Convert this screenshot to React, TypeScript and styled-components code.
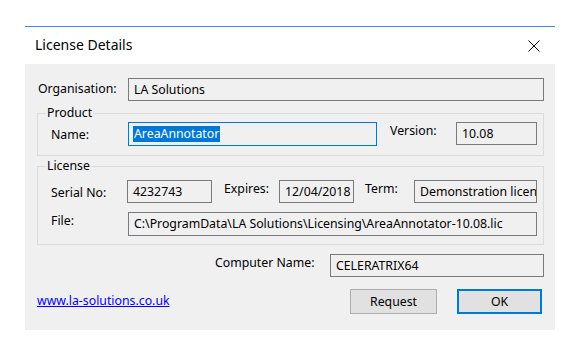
import styled, {createGlobalStyle} from 'styled-components';

const GlobalStyle = createGlobalStyle`
	body {
		margin: 0;
		background: #ffffff;
		font-family: 'Noto Sans', 'Open Sans', sans-serif;
		font-size: 12.3px;
		color: #000000;
	}
`;

const Dialog = styled.div`
	margin: 26px 0 0 25px;
	width: 530px;
	border-top: 1px solid #3d8ee6;
`;

const TitleBar = styled.div`
	height: 37px;
	display: flex;
	align-items: center;
	justify-content: space-between;
	padding: 0 15px 0 10px;
	background: #ffffff;
`;

const Title = styled.div`
	font-size: 14px;
	padding-bottom: 2px;
`;

const Body = styled.div`
	background: #f0f0f0;
	padding: 14px 11px 16px 12px;
	display: flex;
	flex-direction: column;
`;

const Row = styled.div<{$gap?: number; $mt?: number}>`
	display: flex;
	align-items: flex-start;
	margin-top: ${({$mt}) => $mt ?? 0}px;
	gap: ${({$gap}) => $gap ?? 0}px;
`;

const Label = styled.div<{$w?: number; $top?: number; $ml?: number}>`
	width: ${({$w}) => ($w ? `${$w}px` : 'auto')};
	flex: none;
	padding-top: ${({$top}) => $top ?? 2}px;
	margin-left: ${({$ml}) => $ml ?? 0}px;
	line-height: 16px;
	white-space: nowrap;
`;

const Field = styled.div<{$w?: number; $h?: number; $focus?: boolean; $grow?: boolean}>`
	box-sizing: border-box;
	width: ${({$w}) => ($w ? `${$w}px` : 'auto')};
	flex: ${({$grow}) => ($grow ? '1' : 'none')};
	height: ${({$h}) => $h ?? 24}px;
	border: 1px solid ${({$focus}) => ($focus ? '#0078d7' : '#7a7a7a')};
	background: #f0f0f0;
	padding: 0 0 0 ${({$focus}) => ($focus ? 4 : 5)}px;
	display: flex;
	align-items: center;
	line-height: 16px;
	white-space: nowrap;
	overflow: hidden;
`;

const Selected = styled.span`
	background: #0078d7;
	color: #ffffff;
	padding: 0 1px;
`;

const Group = styled.fieldset<{$mt: number}>`
	margin: ${({$mt}) => $mt}px 0 0 0;
	padding: 0 6px 0 13px;
	border: 1px solid #dcdcdc;
	min-width: 0;
`;

const Legend = styled.legend`
	margin-left: -5px;
	padding: 0 1px;
	line-height: 16px;
`;

const GroupBody = styled.div<{$pt: number; $pb: number}>`
	padding: ${({$pt}) => $pt}px 0 ${({$pb}) => $pb}px 0;
	display: flex;
	flex-direction: column;
	gap: 9px;
`;

const Footer = styled.div`
	display: flex;
	align-items: flex-start;
	margin-top: 12px;
	padding-right: 2px;
`;

const Link = styled.a`
	color: #0000ff;
	text-decoration: underline;
	padding-top: 4px;
	line-height: 16px;
	flex: 1;
`;

const Button = styled.button<{$primary?: boolean}>`
	box-sizing: border-box;
	width: ${({$primary}) => ($primary ? 85 : 87)}px;
	height: 25px;
	margin-left: ${({$primary}) => ($primary ? 20 : 0)}px;
	background: #e1e1e1;
	border: ${({$primary}) => ($primary ? '2px solid #0078d7' : '1px solid #adadad')};
	font-family: inherit;
	font-size: 12.3px;
	color: #000000;
	padding: 0;
`;

function CloseIcon() {
	return (
		<svg width='12' height='12' viewBox='0 0 12 12'>
			<path d='M0.5 0.5 L11.5 11.5 M11.5 0.5 L0.5 11.5' stroke='#000' strokeWidth='1' />
		</svg>
	);
}

export default function App() {
	return (
		<>
			<GlobalStyle />
			<Dialog>
				<TitleBar>
					<Title>License Details</Title>
					<CloseIcon />
				</TitleBar>
				<Body>
					<Row>
						<Label $w={90} $ml={1} $top={3}>Organisation:</Label>
						<Field $grow $h={23}>LA Solutions</Field>
					</Row>

					<Group $mt={4}>
						<Legend>Product</Legend>
						<GroupBody $pt={1} $pb={9}>
							<Row>
								<Label $w={77} $top={5}>Name:</Label>
								<Field $w={249} $focus>
									<Selected>AreaAnnotator</Selected>
								</Field>
								<Label $w={66} $ml={13} $top={1}>Version:</Label>
								<Field $w={81} $h={23}>10.08</Field>
							</Row>
						</GroupBody>
					</Group>

					<Group $mt={2}>
						<Legend>License</Legend>
						<GroupBody $pt={6} $pb={8}>
							<Row>
								<Label $w={76} $top={5}>Serial No:</Label>
								<Field $w={85} $h={23}>4232743</Field>
								<Label $w={55} $ml={12} $top={1}>Expires:</Label>
								<Field $w={75} $h={23}>12/04/2018</Field>
								<Label $w={49} $ml={11} $top={1}>Term:</Label>
								<Field $w={123} $h={23}>Demonstration license</Field>
							</Row>
							<Row>
								<Label $w={77} $top={1}>File:</Label>
								<Field $w={409}>
									C:\ProgramData\LA Solutions\Licensing\AreaAnnotator-10.08.lic
								</Field>
							</Row>
						</GroupBody>
					</Group>

					<Row $mt={9}>
						<Label $w={115} $ml={178} $top={1}>Computer Name:</Label>
						<Field $grow $h={23}>CELERATRIX64</Field>
					</Row>

					<Footer>
						<Link href='#'>www.la-solutions.co.uk</Link>
						<Button>Request</Button>
						<Button $primary>OK</Button>
					</Footer>
				</Body>
			</Dialog>
		</>
	);
}
